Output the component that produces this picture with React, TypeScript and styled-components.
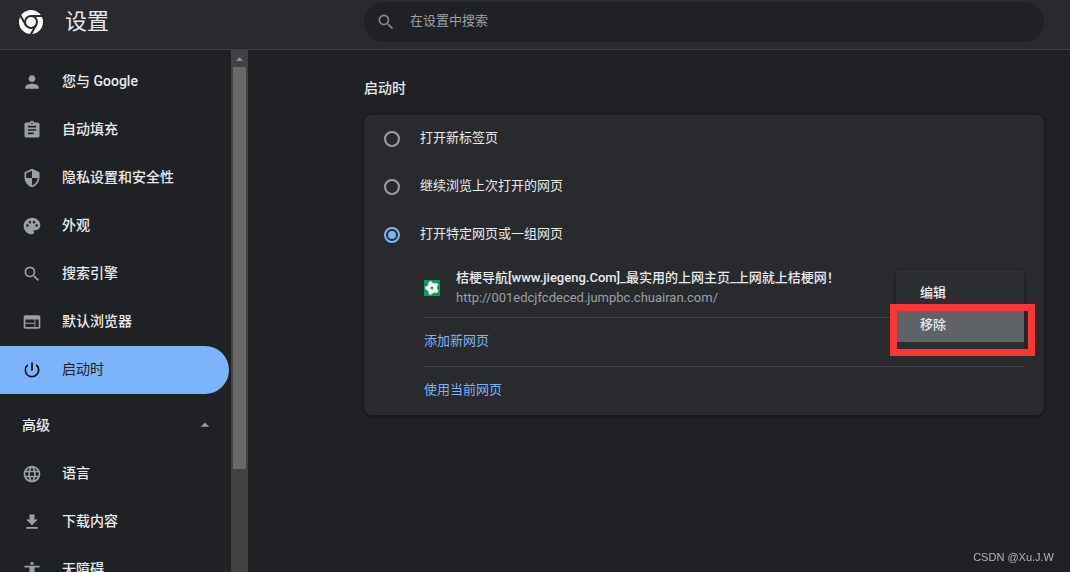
import React, { useState } from "react";
import styled, { createGlobalStyle } from "styled-components";
import {
  MdAccessibility,
  MdArrowDropUp,
  MdAssignment,
  MdFileDownload,
  MdLanguage,
  MdPalette,
  MdPerson,
  MdPowerSettingsNew,
  MdSearch,
  MdSecurity,
  MdWeb,
} from "react-icons/md";

const GlobalStyle = createGlobalStyle`
  * { box-sizing: border-box; }
  body {
    margin: 0;
    background: #202124;
    color: #e8eaed;
    font: 400 13px/20px Roboto, "Noto Sans CJK SC", sans-serif;
  }
  button, input { font: inherit; color: inherit; }
  button { border: 0; background: none; padding: 0; text-align: left; cursor: pointer; }
  a { color: inherit; text-decoration: none; }
`;

const Page = styled.div`
  display: flex;
  flex-direction: column;
  height: 100vh;
  overflow: hidden;
`;

const Header = styled.header`
  display: flex;
  flex: none;
  height: 50px;
  background: #292a2d;
  border-bottom: 1px solid #3f4042;
`;

const Brand = styled.div`
  display: flex;
  flex: none;
  gap: 22px;
  width: 248px;
  height: 44px;
  align-items: center;
  padding-left: 19px;
`;

const BrandTitle = styled.h1`
  margin: 0;
  font-size: 22px;
  line-height: 32px;
  font-weight: 400;
`;

const SearchArea = styled.div`
  flex: 1;
  padding: 2px 26px 0 116px;
`;

const SearchBox = styled.label`
  display: flex;
  align-items: center;
  gap: 14px;
  height: 40px;
  padding: 0 20px 0 12px;
  border-radius: 20px;
  background: #202124;
  color: #80868b;
`;

const SearchInput = styled.input`
  flex: 1;
  min-width: 0;
  height: 36px;
  padding: 0 0 4px;
  border: 0;
  outline: 0;
  background: none;
  &::placeholder { color: #9aa0a6; opacity: 1; }
`;

const Body = styled.div`
  display: flex;
  flex: 1;
  min-height: 0;
`;

const Sidebar = styled.aside`
  display: flex;
  flex: none;
  width: 248px;
  overflow: hidden;
`;

const Nav = styled.nav`
  flex: 1;
  padding-top: 8px;
  font-size: 14px;
`;

const NavItem = styled.a<{ $active?: boolean }>`
  display: flex;
  align-items: center;
  gap: 20px;
  height: 48px;
  margin-right: 2px;
  padding-left: 22px;
  border-radius: 0 24px 24px 0;
  background: ${(p) => (p.$active ? "#7bb4fa" : "transparent")};
  color: ${(p) => (p.$active ? "#202124" : "#e8eaed")};
  font-weight: ${(p) => (p.$active ? 400 : 500)};
  svg { flex: none; color: ${(p) => (p.$active ? "#0b0c0e" : "#9aa0a6")}; }
`;

const NavLabel = styled.span`
  padding-bottom: 2px;
`;

const AdvancedToggle = styled.button`
  display: flex;
  align-items: center;
  justify-content: space-between;
  width: 100%;
  height: 56px;
  padding: 6px 16px 0 22px;
  font-weight: 500;
  svg { color: #9aa0a6; }
`;

const ScrollTrack = styled.div`
  display: flex;
  flex-direction: column;
  flex: none;
  width: 17px;
  padding: 0 2px;
  background: #424242;
`;

const ScrollArrow = styled.svg`
  flex: none;
  width: 13px;
  height: 17px;
`;

const ScrollThumb = styled.div`
  height: 80%;
  max-height: 402px;
  background: #686868;
`;

const Main = styled.main`
  flex: 1;
  min-width: 0;
  padding: 28px 26px 0 116px;
`;

const SectionTitle = styled.h2`
  margin: 0 0 17px;
  font-size: 14px;
  line-height: 20px;
  font-weight: 500;
`;

const Card = styled.section`
  border-radius: 8px;
  background: #292a2d;
  box-shadow: 0 1px 3px 1px rgba(0, 0, 0, 0.3);
`;

const RadioRow = styled.label`
  display: flex;
  align-items: center;
  gap: 20px;
  height: 48px;
  padding-left: 20px;
`;

const Radio = styled.input`
  appearance: none;
  display: grid;
  place-items: center;
  width: 16px;
  height: 16px;
  margin: 0;
  border: 2px solid #9aa0a6;
  border-radius: 50%;
  &:checked { border-color: #7bb4fa; }
  &:checked::before {
    content: "";
    width: 8px;
    height: 8px;
    border-radius: 50%;
    background: #7bb4fa;
  }
`;

const RowText = styled.span`
  padding-bottom: 2px;
`;

const SiteList = styled.div`
  padding: 0 20px 0 60px;
`;

const SiteRow = styled.div`
  position: relative;
  display: flex;
  align-items: center;
  gap: 16px;
  height: 59px;
  border-bottom: 1px solid #3f4042;
`;

const SiteName = styled.div`
  font-weight: 500;
`;

const SiteUrl = styled.div`
  color: #9aa0a6;
`;

const LinkRow = styled.div`
  display: flex;
  align-items: center;
  height: 48px;
  padding-bottom: 2px;
  color: #7bb4fa;
  & + & {
    height: 49px;
    border-top: 1px solid #3f4042;
  }
`;

const Menu = styled.div`
  position: absolute;
  z-index: 1;
  top: 11px;
  right: 0;
  width: 128px;
  padding: 8px 0;
  border-radius: 4px;
  background: #2d2e31;
  box-shadow: 0 1px 4px rgba(0, 0, 0, 0.4);
`;

const MenuItem = styled.button<{ $hovered?: boolean }>`
  display: block;
  width: 100%;
  height: 32px;
  padding: 0 24px 2px;
  font-weight: 500;
  background: ${(p) => (p.$hovered ? "#5f6368" : "transparent")};
`;

const Highlight = styled.div`
  position: absolute;
  top: 34px;
  left: -6px;
  width: 145px;
  height: 52px;
  border: 7px solid #fd3634;
  pointer-events: none;
`;

const Watermark = styled.footer`
  position: fixed;
  right: 16px;
  bottom: 6px;
  font-family: "Liberation Sans", Arial, sans-serif;
  font-size: 11px;
  line-height: 18px;
  color: #b4b5b7;
`;

const ChromeLogo = () => (
  <svg width="24" height="24" viewBox="-12 -12 24 24" aria-hidden="true">
    <circle r="12" fill="#fff" />
    <circle r="6" fill="#fff" stroke="#292a2d" strokeWidth="2" />
    <g stroke="#292a2d" strokeWidth="2">
      <path d="M0-6H12" />
      <path d="M0-6H12" transform="rotate(120)" />
      <path d="M0-6H12" transform="rotate(240)" />
    </g>
  </svg>
);

const SiteIcon = () => (
  <svg width="16" height="16" viewBox="0 0 16 16" aria-hidden="true">
    <path fill="#0b9a5b" d="M0 0h16v16H0z" />
    <g fill="#fff" transform="translate(8 8)">
      {[-18, 54, 126, 198, 270].map((a) => (
        <path key={a} transform={`rotate(${a})`} d="M0 0L-3-3.4L-1.6-6.4L1-7.2L2.8-3.2Z" />
      ))}
    </g>
    <circle cx="8" cy="8" r="1.6" fill="#0b9a5b" />
    <circle cx="8" cy="8" r="0.6" fill="#8fd0b3" />
  </svg>
);

const basicPages = [
  { label: "您与 Google", Icon: MdPerson },
  { label: "自动填充", Icon: MdAssignment },
  { label: "隐私设置和安全性", Icon: MdSecurity },
  { label: "外观", Icon: MdPalette },
  { label: "搜索引擎", Icon: MdSearch },
  { label: "默认浏览器", Icon: MdWeb },
  { label: "启动时", Icon: MdPowerSettingsNew, active: true },
];

const advancedPages = [
  { label: "语言", Icon: MdLanguage },
  { label: "下载内容", Icon: MdFileDownload },
  { label: "无障碍", Icon: MdAccessibility },
];

const startupOptions = ["打开新标签页", "继续浏览上次打开的网页", "打开特定网页或一组网页"];

export default function App() {
  const [startup, setStartup] = useState(2);
  const [open, setOpen] = useState(true);

  return (
    <Page>
      <GlobalStyle />
      <Header>
        <Brand>
          <ChromeLogo />
          <BrandTitle>设置</BrandTitle>
        </Brand>
        <SearchArea>
          <SearchBox>
            <MdSearch size={20} />
            <SearchInput type="text" aria-label="在设置中搜索" placeholder="在设置中搜索" />
          </SearchBox>
        </SearchArea>
      </Header>
      <Body>
        <Sidebar>
          <Nav>
            {basicPages.map(({ label, Icon, active }) => (
              <NavItem key={label} href="#" $active={active}>
                <Icon size={20} />
                <NavLabel>{label}</NavLabel>
              </NavItem>
            ))}
            <AdvancedToggle type="button" aria-expanded={open} onClick={() => setOpen(!open)}>
              高级
              <MdArrowDropUp size={20} />
            </AdvancedToggle>
            {open &&
              advancedPages.map(({ label, Icon }) => (
                <NavItem key={label} href="#">
                  <Icon size={20} />
                  <NavLabel>{label}</NavLabel>
                </NavItem>
              ))}
          </Nav>
          <ScrollTrack aria-hidden="true">
            <ScrollArrow viewBox="0 0 13 17">
              <path d="M3 11L6.5 7L10 11Z" fill="#8b8b8b" />
            </ScrollArrow>
            <ScrollThumb />
          </ScrollTrack>
        </Sidebar>
        <Main>
          <SectionTitle>启动时</SectionTitle>
          <Card>
            {startupOptions.map((text, i) => (
              <RadioRow key={text}>
                <Radio
                  type="radio"
                  name="startup"
                  checked={startup === i}
                  onChange={() => setStartup(i)}
                />
                <RowText>{text}</RowText>
              </RadioRow>
            ))}
            <SiteList>
              <SiteRow>
                <SiteIcon />
                <div>
                  <SiteName>桔梗导航[www.jiegeng.Com]_最实用的上网主页_上网就上桔梗网！</SiteName>
                  <SiteUrl>http://001edcjfcdeced.jumpbc.chuairan.com/</SiteUrl>
                </div>
                <Menu>
                  <MenuItem type="button">编辑</MenuItem>
                  <MenuItem type="button" $hovered>移除</MenuItem>
                  <Highlight />
                </Menu>
              </SiteRow>
              <LinkRow><a href="#">添加新网页</a></LinkRow>
              <LinkRow><a href="#">使用当前网页</a></LinkRow>
            </SiteList>
          </Card>
        </Main>
      </Body>
      <Watermark>CSDN @Xu.J.W</Watermark>
    </Page>
  );
}
